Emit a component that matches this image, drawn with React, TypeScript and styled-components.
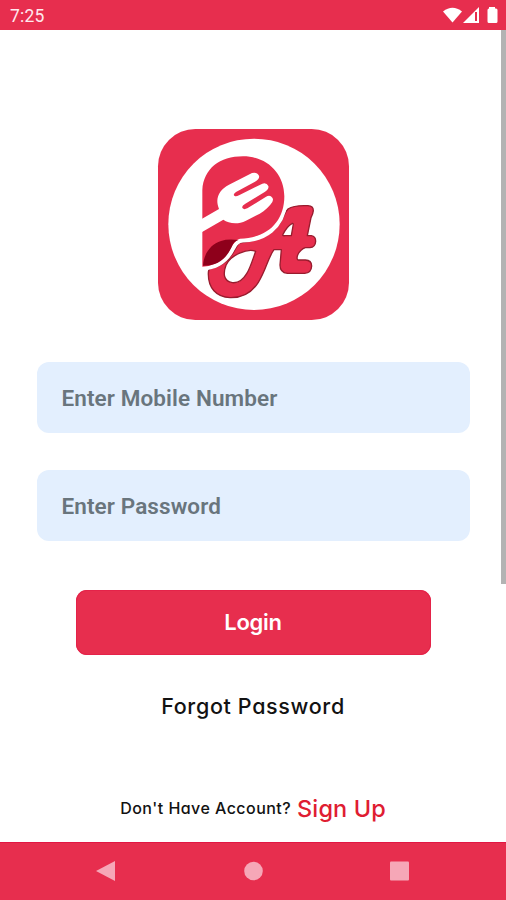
import React from "react";
import styled, { createGlobalStyle } from "styled-components";

const brand = "#e72e4e";

const GlobalStyle = createGlobalStyle`
  *, *::before, *::after { box-sizing: border-box; }
  body { margin: 0; background: #fff; }
  button, input { font: inherit; border: 0; margin: 0; }
`;

const Screen = styled.div`
  position: relative;
  display: flex;
  flex-direction: column;
  width: 506px;
  height: 900px;
  overflow: hidden;
  background: #fff;
  font-family: Inter, "Liberation Sans", sans-serif;
  font-feature-settings: "cv11" 1;
`;

const StatusBar = styled.header`
  display: flex;
  align-items: center;
  justify-content: space-between;
  flex: 0 0 30px;
  padding: 2px 6px 0 10px;
  background: ${brand};
  color: #ffe9ee;
`;

const Clock = styled.time`
  font: 400 17.5px/28px Roboto, sans-serif;
  letter-spacing: 0.2px;
`;

const StatusIcons = styled.svg`
  display: block;
  width: 58px;
  height: 20px;
`;

const Content = styled.main`
  display: flex;
  flex-direction: column;
  align-items: center;
  flex: 1;
`;

const Logo = styled.svg`
  display: block;
  flex: none;
  width: 206px;
  height: 206px;
  margin-top: 90px;
`;

const Form = styled.form`
  display: flex;
  flex-direction: column;
  align-items: center;
  width: 433px;
  margin-top: 36px;
`;

const Field = styled.input`
  width: 433px;
  height: 71px;
  margin-bottom: 37px;
  padding: 0 25px;
  border-radius: 12px;
  outline: 0;
  background: #e3effe;
  font-family: Roboto, sans-serif;
  font-size: 22.5px;
  font-weight: 600;
  letter-spacing: 0.1px;
  color: #37424a;

  &::placeholder { color: #69757d; opacity: 1; }
`;

const LoginButton = styled.button`
  width: 355px;
  height: 65px;
  margin-top: 12px;
  padding: 0 0 2px;
  border-radius: 11px;
  background: ${brand};
  box-shadow: inset 0 0 0 1px #e42349;
  color: #fff;
  font-size: 22px;
  font-weight: 600;
  letter-spacing: -0.3px;
`;

const ForgotLink = styled.a`
  margin-top: 37px;
  font-size: 21.5px;
  font-weight: 500;
  line-height: 28px;
  letter-spacing: 0.65px;
  color: #121212;
  white-space: nowrap;
`;

const SignUpRow = styled.div`
  display: flex;
  align-items: center;
  gap: 6px;
  height: 32px;
  margin-top: 72px;
  white-space: nowrap;
`;

const Prompt = styled.span`
  font-size: 16px;
  font-weight: 500;
  letter-spacing: 0.45px;
  color: #121212;
`;

const SignUpLink = styled.a`
  font-size: 23.5px;
  font-weight: 500;
  letter-spacing: 0.1px;
  color: #df1d32;
`;

const ScrollThumb = styled.div`
  position: absolute;
  top: 30px;
  right: 0;
  width: 5px;
  height: 554px;
  background: #b3b3b3;
`;

const NavBar = styled.nav`
  display: flex;
  justify-content: center;
  flex: 0 0 58px;
  background: ${brand};
  border-top: 1px solid #e21643;
`;

const NavIcons = styled.svg`
  display: block;
  width: 506px;
  height: 57px;
  fill: #f6a7b7;
`;

function BrandLogo() {
  return (
    <Logo viewBox="0 0 618 618" role="img" aria-label="PA logo">
      <rect x="24" y="27" width="573" height="573" rx="112" fill={brand} />
      <circle cx="312" cy="313" r="257" fill="#fff" />
      <g fill={brand} stroke="#981c2e" strokeWidth="4" strokeLinejoin="round">
        <path
          fillRule="evenodd"
          d="M414 267 Q432 255 474 257 Q490 258 490 272 Q489 282 483 293 L472 347 H484 Q497 349 497 364 Q496 382 480 383 H466 Q452 387 443 405 Q439 417 444 420 H466 Q485 421 485 438 Q484 459 464 460 H412 Q390 458 390 435 L394 389 H372 C354 413 348 451 325 487 C306 517 278 534 240 533 C199 531 174 504 175 460 Q175 449 180 446 C215 440 238 421 253 392 L267 369 C326 362 367 344 389 310 C400 297 402 278 414 267 Z
          M427 310 Q410 319 398 345 Q399 348 406 347 H424 L430 312 Z
          M317 394 C294 385 242 403 228 436 C219 460 220 484 247 488 C268 490 280 478 290 461 C301 444 310 413 317 394 Z"
        />
      </g>
      <path d="M158 445 C212 442 236 411 249 385 Q258 363 278 361 C343 359 397 325 407 245" fill="none" stroke="#fff" strokeWidth="13" />
      <path fill={brand} d="M157 440 V210 C161 146 209 109 279 109 C351 109 403 161 403 229 C403 307 350 355 270 356 C248 363 246 386 227 406 Q205 438 157 440 Z" />
      <path fill="#8e001b" d="M159 437 C161 402 182 372 213 363 Q233 356 265 360 Q251 364 244 383 C226 419 204 437 159 437 Z" />
      <path
        fill="#fff"
        d="M155 297 L207 267 C194 235 207 210 237 194 L306 159 Q321 155 327 167 Q330 177 315 185 L258 216 Q248 223 253 227 Q257 231 267 226 L337 191 Q350 187 355 198 Q358 207 344 216 L286 251 Q273 258 278 265 Q282 270 292 265 L347 231 Q360 223 367 233 Q373 242 361 254 C348 270 334 279 317 287 L288 302 C260 316 235 309 220 299 L155 337 Z"
      />
    </Logo>
  );
}

export default function App() {
  return (
    <>
      <GlobalStyle />
      <Screen>
        <StatusBar>
          <Clock>7:25</Clock>
          <StatusIcons viewBox="0 0 58 20" aria-hidden="true">
            <path fill="#fff" d="M1 5.500 Q10.500 -2 20 5.500 L10.500 16.500 Z" />
            <path fill="#fff" fillRule="evenodd" d="M21 17 L37 1 V17 Z M33 6 V15 H35 V6 Z" />
            <path fill="#fff" d="M47 2.500 V1 H53 V2.500 H54 Q55.500 2.500 55.500 4 V15.500 Q55.500 17 54 17 H47 Q45.500 17 45.500 15.500 V4 Q45.500 2.500 47 2.500 Z" />
          </StatusIcons>
        </StatusBar>
        <Content>
          <BrandLogo />
          <Form onSubmit={(event) => event.preventDefault()}>
            <Field type="tel" placeholder="Enter Mobile Number" />
            <Field type="password" placeholder="Enter Password" />
            <LoginButton type="submit">Login</LoginButton>
          </Form>
          <ForgotLink>Forgot Password</ForgotLink>
          <SignUpRow>
            <Prompt>Don't Have Account?</Prompt>
            <SignUpLink>Sign Up</SignUpLink>
          </SignUpRow>
        </Content>
        <NavBar>
          <NavIcons viewBox="0 0 506 57" aria-hidden="true">
            <path d="M96 28 L115 18 V38 Z" />
            <circle cx="253.500" cy="28" r="9.300" />
            <rect x="390" y="18.500" width="19" height="19" rx="1" />
          </NavIcons>
        </NavBar>
        <ScrollThumb />
      </Screen>
    </>
  );
}
